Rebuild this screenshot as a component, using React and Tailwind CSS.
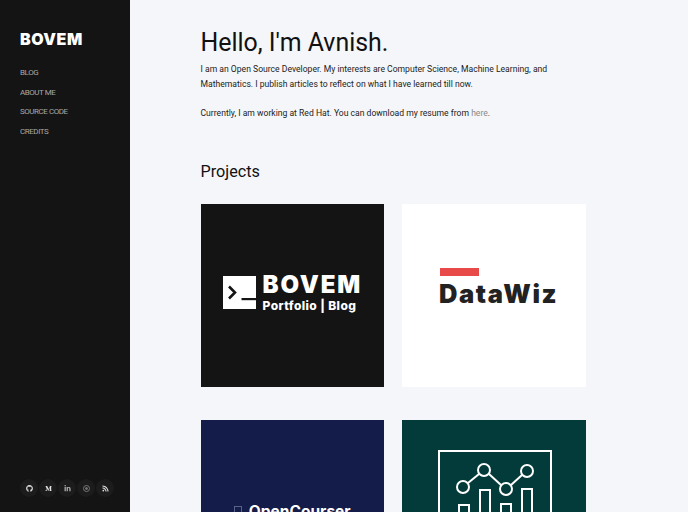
import React from 'react';
import { FaGithub, FaMediumM, FaLinkedinIn, FaRss } from 'react-icons/fa';

const links = ['BLOG', 'ABOUT ME', 'SOURCE CODE', 'CREDITS'];
const socials = [FaGithub, FaMediumM, FaLinkedinIn, null, FaRss];

const Card = ({ className, children }) => (
    <div className={`h-[183px] overflow-hidden ${className}`}>{children}</div>
);

const App = () => {
    return (
        <div className="flex w-[688px] h-[512px] overflow-hidden bg-[#f5f6f9] font-['Roboto',sans-serif]">
            <aside className="w-[130px] shrink-0 h-full bg-[#141414] flex flex-col pl-5 pt-[29px] pb-[15px]">
                <div className="font-['Inter',sans-serif] font-black text-[16px] leading-5 tracking-[0.5px] text-white">BOVEM</div>
                <nav className="mt-[15px] flex flex-col gap-[2.7px]">
                    {links.map(l => (
                        <a key={l} className="text-[8px] leading-[17px] tracking-[-0.45px] text-[#a8a8a8]">{l}</a>
                    ))}
                </nav>
                <div className="mt-auto flex gap-[1px]">
                    {socials.map((Icon, i) => (
                        <div key={i} className="w-[18px] h-[18px] rounded-full bg-[#1c1c1c] flex items-center justify-center">
                            {Icon ? (
                                <Icon className={`w-[7px] h-[7px] ${i === 2 ? 'text-[#b0b0b0]' : 'text-[#e0e0e0]'}`} />
                            ) : (
                                <svg width="7" height="7" viewBox="0 0 7 7" fill="none" stroke="#777" strokeWidth="1">
                                    <circle cx="3.5" cy="3.5" r="3" />
                                    <circle cx="3.5" cy="3.5" r="1" fill="#777" />
                                </svg>
                            )}
                        </div>
                    ))}
                </div>
            </aside>

            <main className="flex-1 pl-[70.5px] pt-[27px]">
                <h1 className="text-[24.9px] leading-8 text-[#111]">Hello, I'm Avnish.</h1>
                <div className="mt-[3px] w-[385px] font-['Roboto',sans-serif] text-[8.6px] leading-[15px] text-[#222]">
                    <p>I am an Open Source Developer. My interests are Computer Science, Machine Learning, and Mathematics. I publish articles to reflect on what I have learned till now.</p>
                    <p className="mt-[14px]">Currently, I am working at Red Hat. You can download my resume from <a className="text-[#8a8a8a]">here</a>.</p>
                </div>
                <h2 className="mt-[41px] text-[16.2px] leading-[20px] text-[#111]">Projects</h2>

                <div className="mt-[22px] w-[385px] grid grid-cols-[183.5px_183.5px] gap-x-[18px] gap-y-[33px]">
                    <Card className="bg-[#141414] flex items-center justify-center gap-[7px] pb-[6px]">
                        <svg width="33" height="33" viewBox="0 0 33 33" className="shrink-0">
                            <rect width="33" height="33" fill="#fff" />
                            <path d="M6 10.5l6 6-6 6" fill="none" stroke="#141414" strokeWidth="2.6" />
                            <rect x="18.5" y="22" width="14.5" height="2.2" fill="#141414" />
                        </svg>
                        <div className="text-white font-['Inter',sans-serif]">
                            <div className="text-[24px] leading-[26px] font-black tracking-[1.8px]">BOVEM</div>
                            <div className="text-[12px] leading-[15px] font-extrabold tracking-[0.4px]">Portfolio | Blog</div>
                        </div>
                    </Card>
                    <Card className="bg-white flex flex-col items-start pl-[38px] pt-[64px]">
                        <div className="w-[39px] h-[7.5px] bg-[#e84a4a]" />
                        <div className="mt-[5px] -ml-[1px] font-['Inter',sans-serif] font-black text-[25.5px] leading-[26px] text-[#222] tracking-[1.6px]">DataWiz</div>
                    </Card>
                    <Card className="bg-[#141c4a] flex items-start justify-center pt-[83px] gap-[7px]">
                        <div className="mt-[3px] w-[8px] h-[9px] border border-[#59608a] shrink-0" />
                        <div className="font-['Inter',sans-serif] font-bold text-[15.5px] leading-[18px] text-white">OpenCourser</div>
                    </Card>
                    <Card className="bg-[#033b3b]">
                        <svg width="184" height="183" viewBox="0 0 184 183" fill="none" stroke="#fff" strokeWidth="2">
                            <rect x="37" y="31" width="112" height="120" />
                            <path d="M66 63L77 54M87 54L99 65M109 65L120 55" />
                            <circle cx="61" cy="67" r="6" />
                            <circle cx="82" cy="50" r="6" />
                            <circle cx="104" cy="69" r="6" />
                            <circle cx="125" cy="51" r="6" />
                            <rect x="57" y="85" width="10" height="35" />
                            <rect x="78" y="70" width="10" height="50" />
                            <rect x="99" y="84" width="10" height="36" />
                            <rect x="120" y="69" width="10" height="51" />
                        </svg>
                    </Card>
                </div>
            </main>
        </div>
    );
};

export default App;
